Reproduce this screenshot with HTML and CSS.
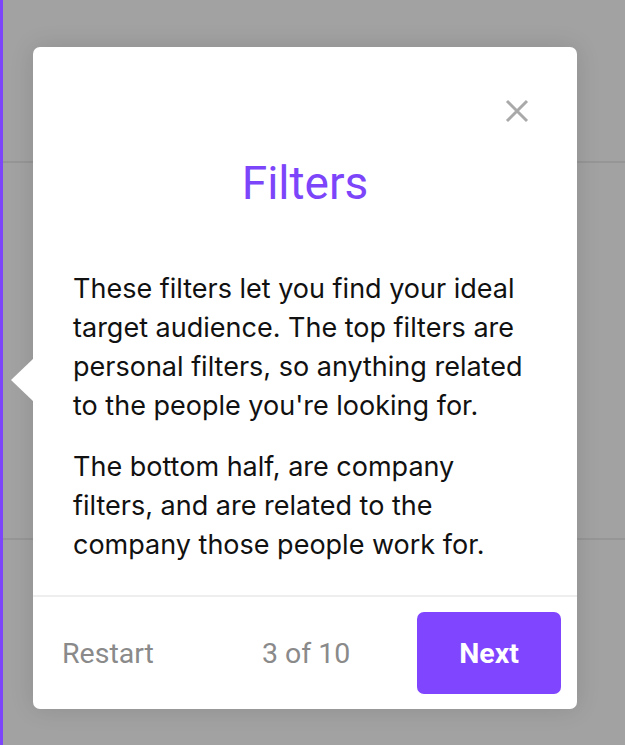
FILE: index.html
```html
<!DOCTYPE html>
<html lang="en">
<head>
<meta charset="utf-8">
<title>Filters tour</title>
<link rel="stylesheet" href="styles.css">
</head>
<body>
<div class="app">
  <div class="rule rule-top"></div>
  <div class="rule rule-bottom"></div>
</div>
<div class="tour">
  <div class="tour-arrow"></div>
  <div class="tour-head">
    <button class="tour-close" aria-label="Close">
      <svg viewBox="0 0 24 24" width="24" height="24"><path d="M2 2 L22 22 M22 2 L2 22" stroke="#a9a9a9" stroke-width="3" fill="none"/></svg>
    </button>
  </div>
  <h1 class="tour-title">Filters</h1>
  <div class="tour-body">
    <p>These filters let you find your ideal target audience. The top filters are personal filters, so anything related to the people you're looking for.</p>
    <p>The bottom half, are company filters, and are related to the company those people work for.</p>
  </div>
  <div class="tour-foot">
    <button class="tour-restart">Restart</button>
    <span class="tour-count">3 of 10</span>
    <button class="tour-next">Next</button>
  </div>
</div>
</body>
</html>
```
FILE: styles.css
```css
html, body {
  margin: 0;
  padding: 0;
  height: 100%;
}
body {
  background: #a2a2a2;
  font-family: Inter, "Noto Sans", sans-serif;
  overflow: hidden;
}
.app {
  height: 100%;
  border-left: 3px solid #7c45fa;
  box-sizing: border-box;
  display: flex;
  flex-direction: column;
  padding-top: 161px;
}
.rule {
  height: 2px;
  background: #969696;
}
.rule-bottom {
  margin-top: 375px;
}
.tour {
  position: absolute;
  left: 33px;
  top: 47px;
  width: 544px;
  height: 662px;
  background: #fff;
  border-radius: 7px;
  box-shadow: 0 0 24px rgba(0,0,0,0.12);
  display: flex;
  flex-direction: column;
  box-sizing: border-box;
}
.tour-arrow {
  position: absolute;
  left: -22px;
  top: 311px;
  width: 0;
  height: 0;
  border-top: 22px solid transparent;
  border-bottom: 22px solid transparent;
  border-right: 23px solid #fff;
}
.tour-head {
  display: flex;
  justify-content: flex-end;
  padding: 52px 48px 0 0;
}
.tour-close {
  background: none;
  border: 0;
  padding: 0;
  width: 24px;
  height: 24px;
  display: block;
}
.tour-close svg { display: block; }
.tour-title {
  margin: 34px 0 0;
  text-align: center;
  font-family: Roboto, sans-serif;
  font-weight: 400;
  font-size: 46px;
  line-height: 52px;
  color: #7c45fa;
}
.tour-body {
  padding: 0 38px 0 40px;
  margin-top: 60px;
  flex: 1;
}
.tour-body p {
  margin: 0 0 22px;
  font-size: 27px;
  line-height: 39px;
  color: #111;
}
.tour-foot {
  border-top: 2px solid #eeeeee;
  height: 114px;
  box-sizing: border-box;
  display: flex;
  align-items: center;
  padding: 0 16px 0 29px;
}
.tour-restart {
  background: none;
  border: 0;
  padding: 0;
  font-family: Roboto, sans-serif;
  font-size: 28.5px;
  color: #8a8a8a;
  width: 200px;
  text-align: left;
}
.tour-count {
  font-family: Roboto, sans-serif;
  font-size: 28.5px;
  color: #8a8a8a;
  flex: 1;
}
.tour-next {
  width: 144px;
  height: 82px;
  border: 0;
  border-radius: 7px;
  background: #8045ff;
  color: #fff;
  font-family: Roboto, sans-serif;
  font-weight: 700;
  font-size: 28.5px;
}
```
